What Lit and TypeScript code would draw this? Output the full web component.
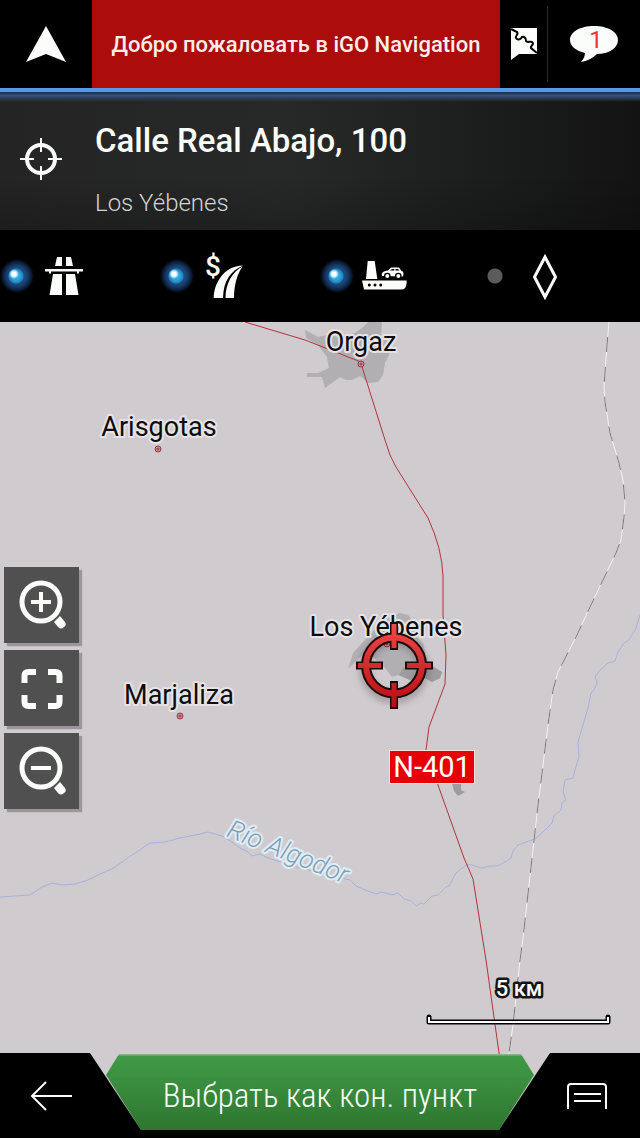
import { css, html, LitElement, svg } from 'lit';
import { customElement, property } from 'lit/decorators.js';

const roadPath = 'M245 322 L305 340 L361 362 L363 370 L385 440 L390 455 L396 467 L428 518 Q442 548 443 576 L443 615 L446 655 L445 684 L429 727 L426 750 L438 785 L464 858 L473 879 L486 960 L500 1060';
const railPath = 'M609 322 L607 345 L604 387 L605 402 L610 433 L619 463 L623 480 L625 502 L624 517 L621 540 L616 553 L603 580 L590 607 L577 635 L558 672 L553 690 L548 725 L538 805 L529 885 L523 938 L520 960 L513 1025 L508 1060 L500 1138';
const riverPath = 'M0 897 L14 896 L30 895 L42 887 L52 883 L62 885 L75 884 L88 880 L100 874 L112 869 L122 862 L135 853 L150 843 L165 842 L180 838 L200 834 L208 832 L222 836 L232 842 L240 848 L248 852 L252 856 L260 854 L268 858 L300 868 L350 880 L356 886 L368 891 L376 894 L382 892 L392 895 L398 893 L404 899 L411 901 L416 906 L421 903 L424 904 L432 896 L438 895 L446 887 L449 886 L456 873 L462 868 L468 864 L475 866 L482 868 L490 866 L497 866 L505 862 L511 858 L513 851 L518 845 L526 842 L535 839 L543 832 L552 823 L554 816 L561 810 L562 803 L566 800 L563 792 L565 780 L573 778 L575 770 L579 757 L578 742 L583 725 L588 708 L591 693 L594 690 L597 683 L595 677 L600 670 L608 663 L615 661 L618 652 L624 643 L629 640 L636 628 L640 615';

const places = [
  { name: 'Orgaz', x: 361, y: 351, dotX: 361, dotY: 364 },
  { name: 'Arisgotas', x: 159, y: 436, dotX: 158, dotY: 449 },
  { name: 'Marjaliza', x: 179, y: 704, dotX: 180, dotY: 716 },
  { name: 'Los Yébenes', x: 386, y: 636, dotX: 387, dotY: 644 },
];

const icons = {
  motorway: svg`
    <path d="M25 13h5v9h-7zM34 13h5l2 9h-7zM13 25h38v2.500h-4v2h-2v-2H19v2h-2v-2h-4zM21 30h9v21H17.500zM34 30h9l3.500 21H34z"/>`,
  toll: svg`
    <text class="dollar" x="21" y="32" text-anchor="middle">$</text>
    <path d="M21.700 54C22 40 31 22 51 21.500C39 27 31.500 36 31 54zM33.500 54C33.500 40 40 28 50.500 22.500C45 30 42 42 42 54z"/>`,
  ferry: svg`
    <path d="M15.700 17h7L25.300 35H14zM10 36.500h44.700c0 5-1 9-5 9H12z"/>
    <path d="M30 32c-1-4 2-5 6-5.500l3-3h8l2.500 3.500c2 0 2.500 3 1.500 5.500z"/>
    <path class="cut" d="M38 26.500l2-1.500h2.300v1.500zM43.500 25h2.500l1.500 1.500h-4z"/>
    <circle class="cut" cx="35.300" cy="32" r="3.300"/><circle class="cut" cx="46.300" cy="32" r="3.300"/>
    <circle cx="35.300" cy="32" r="2"/><circle cx="46.300" cy="32" r="2"/>
    <circle class="cut" cx="17.300" cy="41" r="1.500"/><circle class="cut" cx="23" cy="41" r="1.500"/><circle class="cut" cx="28.700" cy="41" r="1.500"/>`,
  carpool: svg`<path class="line" d="M33 13L43.500 33L33 53L22.500 33z"/>`,
};

@customElement('route-toggle')
export class RouteToggle extends LitElement {
  @property() icon: keyof typeof icons = 'motorway';
  @property() label = '';
  @property({ type: Boolean }) checked = false;

  static styles = css`
    :host {
      display: block;
    }

    label {
      display: flex;
      align-items: center;
      height: 92px;
    }

    input {
      appearance: none;
      width: 36px;
      height: 36px;
      margin: 0 -4px 0 0;
      background: radial-gradient(circle at 15px 18px, #5c5a5b 0 7px, transparent 8px);
    }

    input:checked {
      background:
        radial-gradient(circle at 14px 16px, #fff 0 2px, #bdeaff 3px, transparent 5px),
        radial-gradient(circle at 16px 18px, #2fa3dc 0 4px, #1f83bd 7px, transparent 8px),
        radial-gradient(circle at 17px 18px, #1b4a7c 8px, #173a68 11px, #0d1f3b 14px, transparent 17px);
    }

    svg {
      width: 64px;
      height: 64px;
      fill: #fafdfa;
    }

    .cut {
      fill: #000;
    }

    .line {
      fill: none;
      stroke: #fafdfa;
      stroke-width: 3;
    }

    .dollar {
      font: 500 28px Roboto, sans-serif;
    }
  `;

  render() {
    return html`
      <label>
        <input type="checkbox" aria-label=${this.label} .checked=${this.checked}>
        <svg viewBox="0 0 64 64">${icons[this.icon]}</svg>
      </label>`;
  }
}

@customElement('route-map')
export class RouteMap extends LitElement {
  static styles = css`
    :host {
      display: block;
      background: #cfcbcf;
    }

    svg {
      display: block;
      width: 100%;
      height: 100%;
      font-family: Roboto, sans-serif;
    }

    .town {
      fill: #b1afb2;
    }

    .district {
      fill: #9c9c9e;
    }

    .river,
    .road,
    .rail,
    .sleepers {
      fill: none;
    }

    .river {
      stroke: #a8b3da;
    }

    .road {
      stroke: #b2343c;
    }

    .rail {
      stroke: #f4f2f4;
    }

    .sleepers {
      stroke: #77757a;
      stroke-dasharray: 15 15;
      stroke-dashoffset: -15;
    }

    .dot {
      fill: #d98f96;
      stroke: #8c3a46;
    }

    .place,
    .river-name {
      font-size: 27px;
      text-anchor: middle;
      paint-order: stroke;
      stroke: #e6e3e6;
      stroke-width: 4px;
      stroke-linejoin: round;
      fill: #0c0c0c;
    }

    .river-name {
      font-size: 26px;
      font-style: italic;
      font-weight: 300;
      fill: #7f9db5;
      stroke: #dfeef4;
    }

    .sign {
      fill: #e60005;
      stroke: #f8dede;
    }

    .sign-text {
      font-size: 29px;
      text-anchor: middle;
      fill: #fff;
    }

    .edge {
      fill: none;
      stroke: #1c0b0b;
    }

    .shade {
      fill: none;
      stroke: #0003;
      stroke-width: 12;
    }
  `;

  render() {
    return html`
      <svg viewBox="0 322 640 816" preserveAspectRatio="xMidYMid slice">
        <defs>
          <linearGradient id="red" gradientUnits="userSpaceOnUse" x1="0" y1="622" x2="0" y2="708">
            <stop offset="0" stop-color="#f04a48"/>
            <stop offset="1" stop-color="#b80d12"/>
          </linearGradient>
          <filter id="soft" x="-30%" y="-30%" width="160%" height="160%"><feGaussianBlur stdDeviation="3"/></filter>
        </defs>
        <path class="town" d="M305 330L318 337L327 335L340 337L355 333L363 327L368 322H382L381 337L390 342L389 355L385 363L383 375L378 382L368 383L360 376L352 380L346 380L340 377L325 388L322 377H307V373H318L329 368L327 357L318 345L306 338z"/>
        <path class="town" d="M348 669L353 653L362 643L377 627L390 617L400 613L408 615L412 620L417 637L423 643L428 663L442 672L440 678L432 682L423 675L410 680L398 675L392 677L385 668L367 652L357 660z"/>
        <path class="district" d="M403 668L415 663L428 664L442 672L440 678L432 682L423 677L410 680L399 675zM452 783H461V790L465 792L458 796L454 791z"/>
        <path class="river" d=${riverPath}/>
        <path class="rail" d=${railPath}/>
        <path class="sleepers" d=${railPath}/>
        <path class="road" d=${roadPath}/>
        ${places.map(p => svg`
          <circle class="dot" cx=${p.dotX} cy=${p.dotY} r="3"/>
          <circle class="dot" cx=${p.dotX} cy=${p.dotY} r="1"/>
          <text class="place" x=${p.x} y=${p.y}>${p.name}</text>`)}
        <text class="river-name" transform="translate(285 860) rotate(22)">Río Algodor</text>
        <rect class="sign" x="389.500" y="750.500" width="85" height="33"/>
        <text class="sign-text" x="432" y="777">N-401</text>

        <circle class="shade" cx="394" cy="669" r="29" filter="url(#soft)"/>
        <circle class="edge" cx="394" cy="665.500" r="28" stroke-width="10"/>
        <path class="edge" stroke-width="8" stroke-linejoin="round" d="M394 622v28M394 681v28M356 665.500h27M405 665.500h28"/>
        <circle cx="394" cy="665.500" r="28" fill="none" stroke="url(#red)" stroke-width="6"/>
        <path fill="url(#red)" d="M391.500 624h5v24h-5zM391.500 683h5v24h-5zM358 663h23v5h-23zM407 663h24v5h-24z"/>
      </svg>`;
  }
}

@customElement('app-root')
export class AppRoot extends LitElement {
  static styles = css`
    :host {
      display: flex;
      flex-direction: column;
      min-height: 100vh;
      background: #000;
      color: #fafdfa;
      font-family: Roboto, sans-serif;
    }

    button {
      display: flex;
      align-items: center;
      justify-content: center;
      padding: 0;
      border: none;
      background: #000;
      color: inherit;
      font-family: inherit;
    }

    svg {
      display: block;
      fill: #fafdfa;
    }

    .line {
      fill: none;
      stroke: #fafdfa;
    }

    .top {
      display: flex;
      height: 88px;
      border-bottom: 4px solid #5698ea;
    }

    .side {
      width: 92px;
    }

    .notice {
      flex: 1;
      background: #ac0c0a;
      color: #fbeeea;
      font-size: 22px;
      font-weight: 500;
      white-space: nowrap;
    }

    .puzzle {
      width: 47px;
    }

    .divider {
      width: 1px;
      margin: 6px 0;
      background: #2a2a2a;
    }

    .count {
      font: 24px Roboto, sans-serif;
      fill: #e8343c;
    }

    .address {
      display: flex;
      height: 138px;
      background:
        linear-gradient(#1c3860 0 2px, #39567d 3px, #2c4058 6px, transparent 10px),
        linear-gradient(transparent 60%, #0003),
        linear-gradient(to right, #242424, #272928 45%, #131314);
    }

    .address svg {
      margin: 46px 33px 0 20px;
    }

    h1,
    p {
      margin: 0;
    }

    h1 {
      padding-top: 29px;
      font-size: 33px;
      line-height: 40px;
      font-weight: 500;
    }

    p {
      padding-top: 27px;
      font-size: 24px;
      line-height: 30px;
      font-weight: 300;
      color: #d4d4d4;
    }

    .toggles {
      display: grid;
      grid-template-columns: repeat(4, 1fr);
    }

    .stage {
      flex: 1;
      display: grid;
      grid-template: 1fr auto / auto 1fr;
    }

    route-map {
      grid-area: 1 / 1 / 3 / 3;
    }

    .zoom {
      grid-area: 1 / 1;
      align-self: center;
      display: flex;
      flex-direction: column;
      gap: 7px;
      padding-left: 4px;
    }

    .zoom button {
      width: 75px;
      height: 76px;
      background: #505051;
      box-shadow: 3px 3px 1px #9b969b;
    }

    .scale {
      grid-area: 1 / 2;
      align-self: end;
      justify-self: end;
      padding: 0 29px 28px 0;
    }

    .distance {
      font-size: 22px;
      font-weight: 500;
      text-anchor: middle;
      paint-order: stroke;
      stroke: #111519;
      stroke-width: 5px;
      stroke-linejoin: round;
    }

    .bottom {
      grid-area: 2 / 1 / 3 / 3;
      display: flex;
      border-bottom: 8px solid #000;
    }

    .bottom button {
      height: 77px;
      padding-top: 8px;
    }

    .back,
    .menu {
      z-index: 1;
      width: 141px;
    }

    .bottom .back {
      justify-content: flex-start;
      padding-left: 30px;
      clip-path: polygon(0 0, 90px 0, 100% 100%, 0 100%);
    }

    .bottom .menu {
      justify-content: flex-end;
      padding-right: 32px;
      clip-path: polygon(51px 0, 100% 0, 100% 100%, 0 100%);
    }

    .bottom .select {
      flex: 1;
      margin: 0 -35px;
      background: linear-gradient(#84bb84 0 2px, #3f9a46 3px, #3c9142 30%, #2d762e);
      font-family: 'Roboto Condensed', Roboto, sans-serif;
      font-size: 33px;
      font-weight: 300;
      white-space: nowrap;
      clip-path: polygon(13px 1px, calc(100% - 13px) 1px, 100% 22px, calc(100% - 35px) 100%, 35px 100%, 0 22px);
    }
  `;

  render() {
    return html`
      <header class="top">
        <button class="side" aria-label="Навигация">
          <svg width="40" height="38"><path d="M20 1L40 37L20 29L0 37z"/></svg>
        </button>
        <button class="notice">Добро пожаловать в iGO Navigation</button>
        <button class="puzzle" aria-label="Дополнения">
          <svg width="28" height="34">
            <path d="M1 1H27V27H9L1 33z"/>
            <path fill="none" stroke="#000" stroke-width="2" d="M1 2L7 5C9 7 5 9 6 11C8 14 11 12 12 10C14 9 16 11 16 14C17 16 20 14 22 15C25 17 20 19 21 21L27 26"/>
          </svg>
        </button>
        <div class="divider"></div>
        <button class="side" aria-label="Сообщения">
          <svg width="50" height="38">
            <path d="M25 1C39 1 49 7 49 15C49 23 40 29 28 29C24 33 18 36 12 37C15 34 16 30 16 28C7 26 1 21 1 15C1 7 11 1 25 1z"/>
            <text class="count" x="27" y="23" text-anchor="middle">1</text>
          </svg>
        </button>
      </header>

      <section class="address">
        <svg width="42" height="42">
          <circle class="line" cx="21" cy="21" r="14" stroke-width="4"/>
          <path class="line" stroke-width="2" d="M21 0V14M21 28V42M0 21H14M28 21H42"/>
        </svg>
        <div>
          <h1>Calle Real Abajo, 100</h1>
          <p>Los Yébenes</p>
        </div>
      </section>

      <section class="toggles">
        <route-toggle icon="motorway" label="Автомагистрали" checked></route-toggle>
        <route-toggle icon="toll" label="Платные дороги" checked></route-toggle>
        <route-toggle icon="ferry" label="Паромы" checked></route-toggle>
        <route-toggle icon="carpool" label="Полосы для машин с пассажирами"></route-toggle>
      </section>

      <main class="stage">
        <route-map></route-map>
        <div class="zoom">
          <button aria-label="Увеличить">${this.renderLens(true)}</button>
          <button aria-label="Показать всё">
            <svg width="75" height="76">
              <path class="line" stroke-width="6" d="M20.500 33V26Q20.500 22 24.500 22H32M44 22H51.500Q55.500 22 55.500 26V33M55.500 45V52Q55.500 56 51.500 56H44M32 56H24.500Q20.500 56 20.500 52V45"/>
            </svg>
          </button>
          <button aria-label="Уменьшить">${this.renderLens(false)}</button>
        </div>
        <div class="scale">
          <svg width="185" height="50">
            <text class="distance" x="93" y="21">5 км</text>
            <path fill="none" stroke="#000" stroke-width="5" stroke-linejoin="round" stroke-linecap="round" d="M3 42V47H182V42"/>
            <path class="line" stroke-width="2" d="M3 42V47H182V42"/>
          </svg>
        </div>
        <nav class="bottom">
          <button class="back" aria-label="Назад">
            <svg width="43" height="30"><path class="line" stroke-width="2" d="M42 15H2M16 1L2 15L16 29"/></svg>
          </button>
          <button class="select">Выбрать как кон. пункт</button>
          <button class="menu" aria-label="Меню">
            <svg width="42" height="28"><path class="line" stroke-width="2" d="M2 27V5Q2 2 5 2H37Q40 2 40 5V27M8 12H35M8 19H35"/></svg>
          </button>
        </nav>
      </main>`;
  }

  private renderLens(plus: boolean) {
    return html`
      <svg width="75" height="76">
        <circle class="line" cx="37" cy="35" r="19" stroke-width="5"/>
        <path class="line" stroke-width="4" d=${plus ? 'M27 35H47M37 25V45' : 'M27 35H47'}/>
        <path d="M50 55L56 49L61 55Q63 58 60 60Q57 63 54 60z"/>
      </svg>`;
  }
}
